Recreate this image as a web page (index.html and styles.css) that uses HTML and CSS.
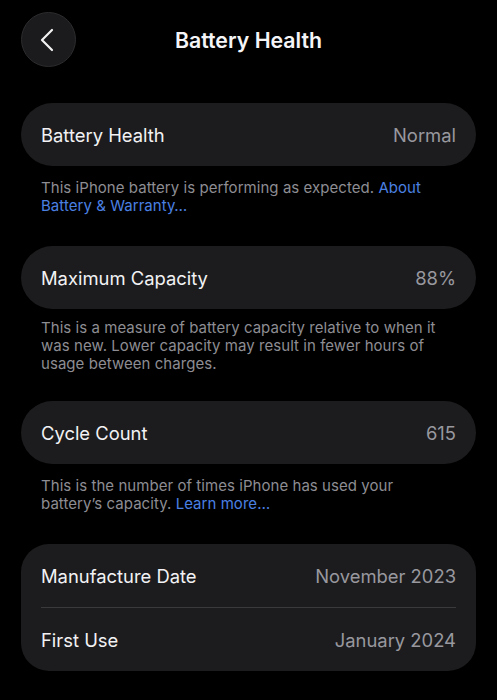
FILE: index.html
```html
<!DOCTYPE html>
<html>
<head>
<meta charset="utf-8">
<link rel="stylesheet" href="styles.css">
</head>
<body>
<div class="screen">
  <header class="nav">
    <button class="back" aria-label="Back">
      <svg width="55" height="55" viewBox="0 0 55 55"><path d="M31 18 L21 28 L31 38" fill="none" stroke="#f2f2f2" stroke-width="2.2" stroke-linecap="round" stroke-linejoin="round"/></svg>
    </button>
    <h1 class="title">Battery Health</h1>
  </header>

  <section class="group">
    <div class="card">
      <div class="row"><span class="label">Battery Health</span><span class="value">Normal</span></div>
    </div>
    <p class="note">This iPhone battery is performing as expected. <a class="link">About Battery &amp; Warranty…</a></p>
  </section>

  <section class="group">
    <div class="card">
      <div class="row"><span class="label">Maximum Capacity</span><span class="value">88%</span></div>
    </div>
    <p class="note note-tight">This is a measure of battery capacity relative to when it was new. Lower capacity may result in fewer hours of usage between charges.</p>
  </section>

  <section class="group">
    <div class="card">
      <div class="row"><span class="label">Cycle Count</span><span class="value">615</span></div>
    </div>
    <p class="note">This is the number of times iPhone has used your battery’s capacity. <a class="link">Learn more…</a></p>
  </section>

  <section class="group">
    <div class="card card-multi">
      <div class="row"><span class="label">Manufacture Date</span><span class="value">November 2023</span></div>
      <div class="sep"></div>
      <div class="row"><span class="label">First Use</span><span class="value">January 2024</span></div>
    </div>
  </section>
</div>
</body>
</html>
```
FILE: styles.css
```css
* { box-sizing: border-box; }
html, body {
  margin: 0;
  padding: 0;
  background: #000;
}
body {
  font-family: Inter, "Noto Sans", "Liberation Sans", sans-serif;
  color: #f5f5f7;
}
.screen {
  width: 497px;
  height: 700px;
  overflow: hidden;
  padding: 12px 21px 0;
}
.nav {
  display: flex;
  align-items: center;
  height: 55px;
  position: relative;
  margin-bottom: 36px;
}
.back {
  width: 55px;
  height: 55px;
  border-radius: 50%;
  background: #1b1b1d;
  border: 1px solid #2c2c2e;
  padding: 0;
  display: flex;
  align-items: center;
  justify-content: center;
  flex: none;
}
.back svg { display: block; margin: -1px; }
.title {
  position: absolute;
  left: 0;
  right: 0;
  top: 0;
  bottom: 0;
  margin: 0;
  display: flex;
  align-items: center;
  justify-content: center;
  font-size: 21.3px;
  font-weight: 600;
  color: #f5f5f7;
  pointer-events: none;
}
.group { margin-bottom: 31px; }
.card {
  background: #1c1c1e;
  border-radius: 32px;
  padding: 0 20px;
}
.card-multi { border-radius: 28px; }
.row {
  height: 63px;
  display: flex;
  align-items: center;
  justify-content: space-between;
  font-size: 18.4px;
}
.label { color: #f2f2f4; }
.value { color: #98989e; }
.sep {
  height: 1px;
  background: #3a3a3c;
}
.note {
  margin: 13px 0 0;
  padding: 0 20px;
  font-size: 15px;
  letter-spacing: 0.05px;
  line-height: 18px;
  color: #8d8d93;
}
.note-tight { margin-top: 10px; margin-bottom: -3px; }
.link { color: #4b80e3; }
```
